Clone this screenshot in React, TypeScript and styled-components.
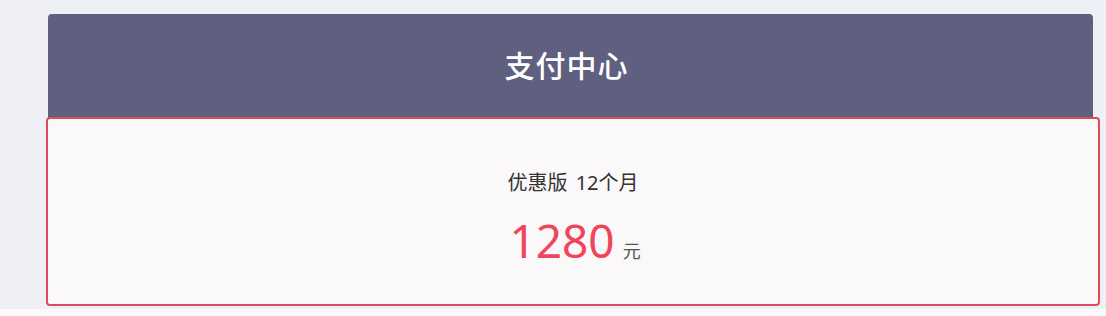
import React from 'react';
import styled, { createGlobalStyle } from 'styled-components';

const GlobalStyle = createGlobalStyle`
  html, body {
    margin: 0;
    padding: 0;
    background: #eef0f6;
    font-family: "Noto Sans", "Noto Sans CJK SC", sans-serif;
  }
`;

const Page = styled.div`
  width: 1106px;
  height: 316px;
  display: flex;
  flex-direction: column;
  overflow: hidden;
`;

const Panel = styled.div`
  padding: 14px 6px 0 46px;
  display: flex;
  flex-direction: column;
`;

const Header = styled.div`
  margin: 0 7px 0 2px;
  height: 104px;
  background: #5f6080;
  border-radius: 4px 4px 0 0;
  display: flex;
  align-items: center;
  justify-content: center;
  color: #ffffff;
  font-size: 30px;
  font-weight: 500;
  letter-spacing: 1px;
  padding: 0 8px 4px 0;
  box-sizing: border-box;
`;

const PlanCard = styled.div`
  margin-top: -1px;
  height: 189px;
  box-sizing: border-box;
  border: 2px solid #e04a5f;
  border-radius: 4px;
  background: #fbf8f9;
  display: flex;
  flex-direction: column;
  align-items: center;
  padding-top: 50px;
`;

const PlanName = styled.div`
  font-size: 20px;
  color: #333333;
  line-height: 28px;
  word-spacing: 3px;
`;

const PriceRow = styled.div`
  margin-top: 14px;
  display: flex;
  align-items: baseline;
  gap: 8px;
  padding-left: 4px;
`;

const Amount = styled.span`
  font-size: 46px;
  color: #f0455a;
  line-height: 58px;
`;

const Unit = styled.span`
  font-size: 18px;
  color: #555555;
`;

const Footer = styled.div`
  flex: 1;
  margin-top: 3px;
  background: #fafafa;
`;

export default function App() {
  return (
    <>
      <GlobalStyle />
      <Page>
        <Panel>
          <Header>支付中心</Header>
          <PlanCard>
            <PlanName>优惠版 12个月</PlanName>
            <PriceRow>
              <Amount>1280</Amount>
              <Unit>元</Unit>
            </PriceRow>
          </PlanCard>
        </Panel>
        <Footer />
      </Page>
    </>
  );
}
